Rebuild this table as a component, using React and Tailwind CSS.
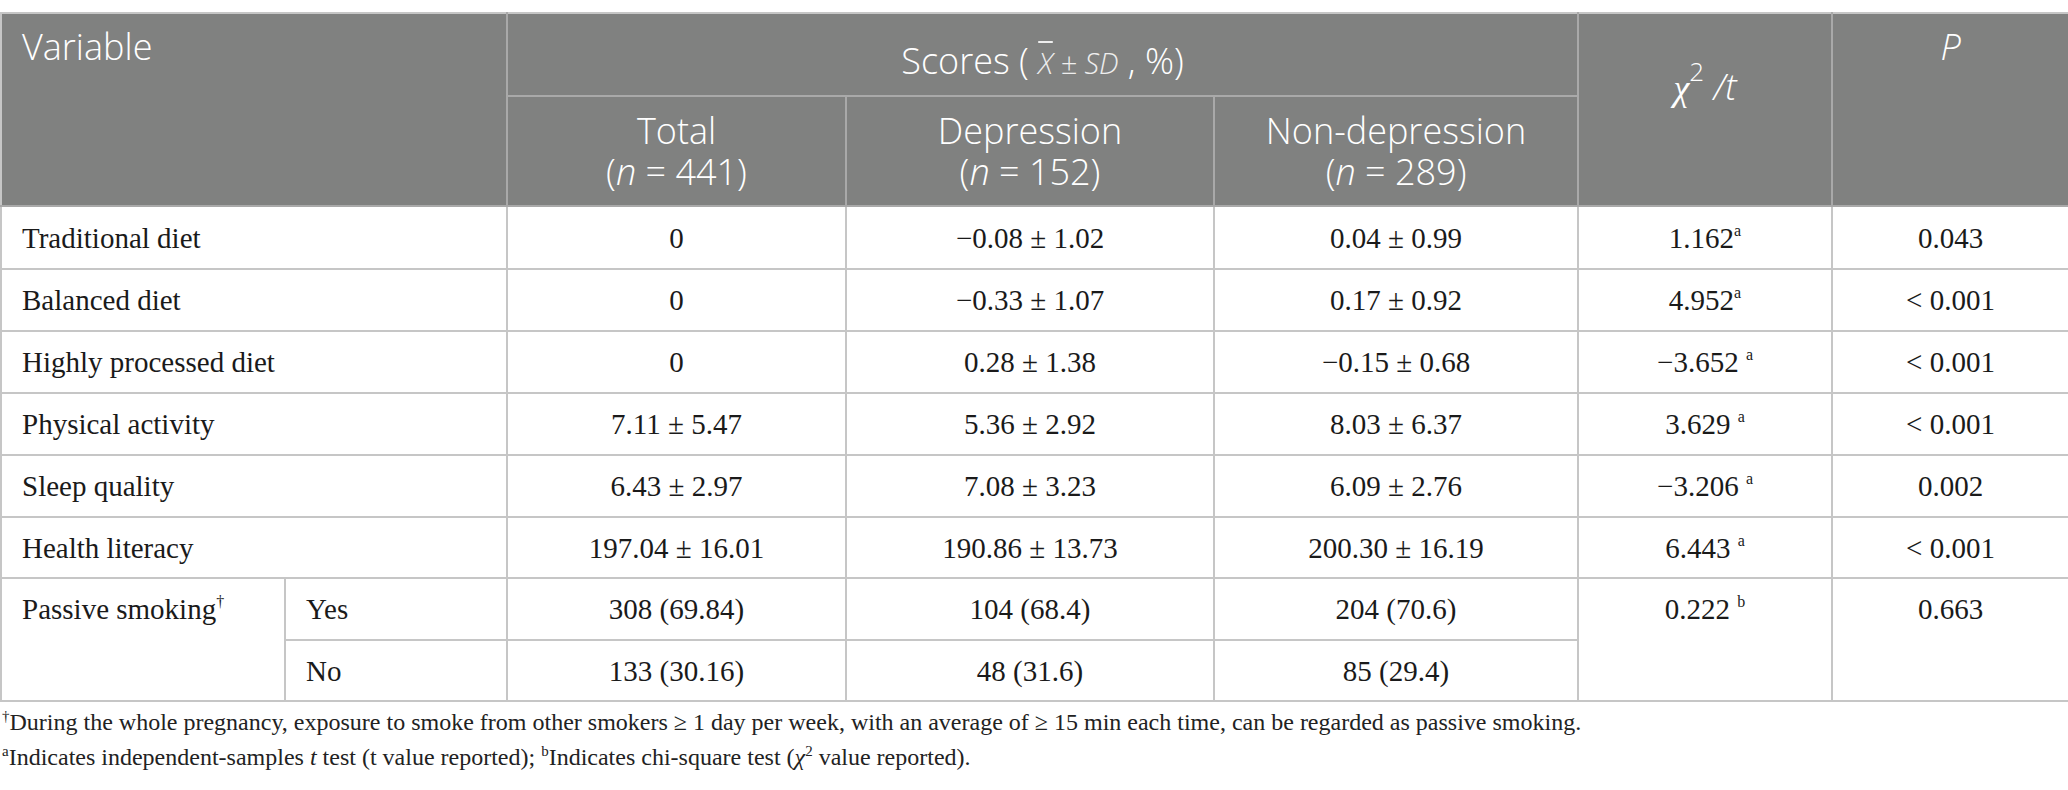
import React from "react";

const serif = { fontFamily: '"Liberation Serif", "Times New Roman", serif' };

const rows = [
  ["Traditional diet", "0", "−0.08 ± 1.02", "0.04 ± 0.99", "1.162", "a", false, "0.043", "h-[63px]"],
  ["Balanced diet", "0", "−0.33 ± 1.07", "0.17 ± 0.92", "4.952", "a", false, "< 0.001", "h-[62px]"],
  ["Highly processed diet", "0", "0.28 ± 1.38", "−0.15 ± 0.68", "−3.652", "a", true, "< 0.001", "h-[62px]"],
  ["Physical activity", "7.11 ± 5.47", "5.36 ± 2.92", "8.03 ± 6.37", "3.629", "a", true, "< 0.001", "h-[62px]"],
  ["Sleep quality", "6.43 ± 2.97", "7.08 ± 3.23", "6.09 ± 2.76", "−3.206", "a", true, "0.002", "h-[62px]"],
  ["Health literacy", "197.04 ± 16.01", "190.86 ± 13.73", "200.30 ± 16.19", "6.443", "a", true, "< 0.001", "h-[61px]"],
];

function Sup({ children }) {
  return <sup className="text-[16px] top-[-0.75em]">{children}</sup>;
}

function TwoLine({ title, n }) {
  return (
    <div className="flex flex-col items-center">
      <span className="inline-block h-[41px] leading-[41px]">{title}</span>
      <span className="inline-block h-[41px] leading-[41px]">
        ({<i>n</i>} = {n})
      </span>
    </div>
  );
}

export default function App() {
  const hd = "border-2 border-[#a9a9a9] text-white font-light";
  const td = "border-2 border-[#c6c6c6] text-center align-middle text-[#1a1a1a]";
  return (
    <div className="w-[2068px] h-[790px] bg-white overflow-hidden">
      <div className="pt-[12px]">
        <table className="table-fixed border-collapse w-[2068px]" style={serif}>
          <colgroup>
            <col className="w-[284px]" />
            <col className="w-[222px]" />
            <col className="w-[339px]" />
            <col className="w-[368px]" />
            <col className="w-[364px]" />
            <col className="w-[254px]" />
            <col className="w-[237px]" />
          </colgroup>
          <thead
            className="bg-[#808180] text-[36px] leading-[41px]"
            style={{ fontFamily: '"Open Sans", "Noto Sans", sans-serif' }}
          >
            <tr className="h-[83px]">
              <th colSpan={2} rowSpan={2} className={`${hd} text-left align-top pl-[20px] pt-[12px] font-light border-t-[#c6c6c6] border-l-[#c6c6c6]`}>
                Variable
              </th>
              <th colSpan={3} className={`${hd} text-center align-middle pt-[14px] font-light border-t-[#c6c6c6]`}>
                Scores ({" "}
                <span className="italic text-[29px] font-light text-[#eeeeee]">
                  <span className="overline">X</span> ± SD
                </span>{" "}
                , %)
              </th>
              <th rowSpan={2} className={`${hd} text-center align-top pt-[52px] font-light border-t-[#c6c6c6]`}>
                <span className="italic font-light" style={serif}>χ</span>
                <sup className="text-[26px] top-[-0.75em] font-light">2</sup>
                <span className="italic"> /t</span>
              </th>
              <th rowSpan={2} className={`${hd} text-center align-top pt-[12px] font-light border-t-[#c6c6c6] border-r-[#c6c6c6]`}>
                <span className="italic">P</span>
              </th>
            </tr>
            <tr className="h-[110px]">
              <th className={`${hd} text-center align-middle font-light`}>
                <TwoLine title="Total" n="441" />
              </th>
              <th className={`${hd} text-center align-middle font-light`}>
                <TwoLine title="Depression" n="152" />
              </th>
              <th className={`${hd} text-center align-middle font-light`}>
                <TwoLine title="Non-depression" n="289" />
              </th>
            </tr>
          </thead>
          <tbody className="text-[29px] leading-[34px]">
            {rows.map((r) => (
              <tr key={r[0]} className={r[8]}>
                <td colSpan={2} className={`${td} text-left pl-[20px]`}>{r[0]}</td>
                <td className={td}>{r[1]}</td>
                <td className={td}>{r[2]}</td>
                <td className={td}>{r[3]}</td>
                <td className={td}>
                  {r[4]}
                  {r[6] ? " " : ""}
                  <Sup>{r[5]}</Sup>
                </td>
                <td className={td}>{r[7]}</td>
              </tr>
            ))}
            <tr className="h-[62px]">
              <td rowSpan={2} className={`${td} text-left align-top pl-[20px] pt-[13px]`}>
                Passive smoking<Sup>†</Sup>
              </td>
              <td className={`${td} text-left pl-[20px]`}>Yes</td>
              <td className={td}>308 (69.84)</td>
              <td className={td}>104 (68.4)</td>
              <td className={td}>204 (70.6)</td>
              <td rowSpan={2} className={`${td} align-top pt-[13px]`}>
                0.222 <Sup>b</Sup>
              </td>
              <td rowSpan={2} className={`${td} align-top pt-[13px]`}>0.663</td>
            </tr>
            <tr className="h-[61px]">
              <td className={`${td} text-left pl-[20px]`}>No</td>
              <td className={td}>133 (30.16)</td>
              <td className={td}>48 (31.6)</td>
              <td className={td}>85 (29.4)</td>
            </tr>
          </tbody>
        </table>
        <div className="pt-[3px] pl-[2px] text-[24px] leading-[35px] text-[#222]" style={serif}>
          <p>
            <sup className="text-[15px] top-[-0.6em]">†</sup>During the whole pregnancy, exposure to smoke from other smokers ≥ 1 day per week, with an average of ≥ 15 min each time, can be regarded as passive smoking.
          </p>
          <p>
            <sup className="text-[15px] top-[-0.6em]">a</sup>Indicates independent-samples <span className="italic">t</span> test (t value reported); <sup className="text-[15px] top-[-0.6em]">b</sup>Indicates chi-square test (<span className="italic">χ</span><sup className="text-[15px] top-[-0.6em]">2</sup> value reported).
          </p>
        </div>
      </div>
    </div>
  );
}
